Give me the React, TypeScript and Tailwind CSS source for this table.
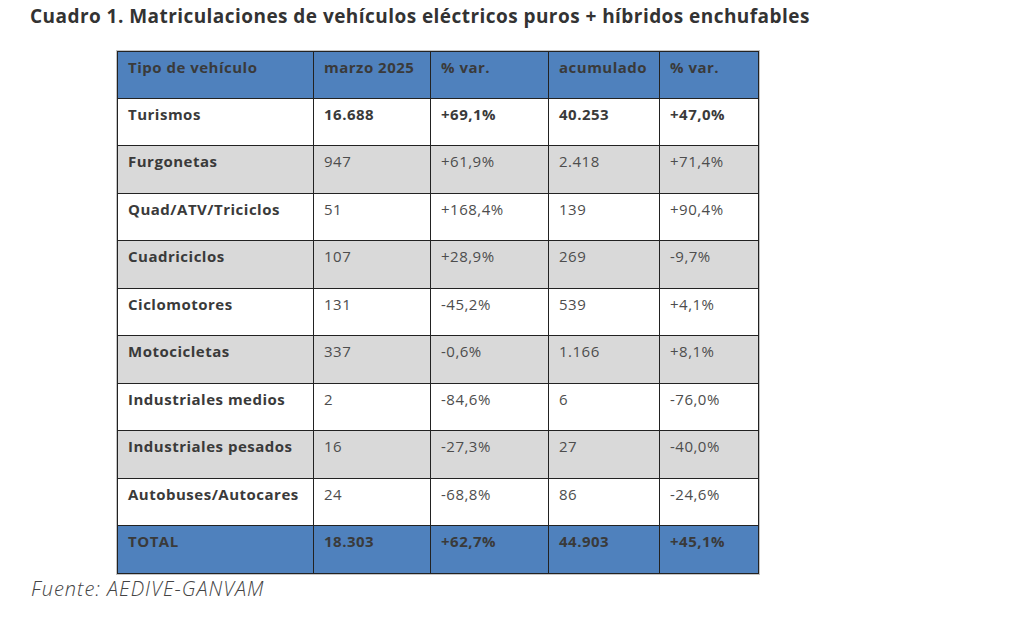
import React from "react"

type Row = {
  tipo: string
  marzo: string
  var1: string
  acum: string
  var2: string
  gray?: boolean
  strong?: boolean
}

const rows: Row[] = [
  { tipo: "Turismos", marzo: "16.688", var1: "+69,1%", acum: "40.253", var2: "+47,0%", strong: true },
  { tipo: "Furgonetas", marzo: "947", var1: "+61,9%", acum: "2.418", var2: "+71,4%", gray: true },
  { tipo: "Quad/ATV/Triciclos", marzo: "51", var1: "+168,4%", acum: "139", var2: "+90,4%" },
  { tipo: "Cuadriciclos", marzo: "107", var1: "+28,9%", acum: "269", var2: "-9,7%", gray: true },
  { tipo: "Ciclomotores", marzo: "131", var1: "-45,2%", acum: "539", var2: "+4,1%" },
  { tipo: "Motocicletas", marzo: "337", var1: "-0,6%", acum: "1.166", var2: "+8,1%", gray: true },
  { tipo: "Industriales medios", marzo: "2", var1: "-84,6%", acum: "6", var2: "-76,0%" },
  { tipo: "Industriales pesados", marzo: "16", var1: "-27,3%", acum: "27", var2: "-40,0%", gray: true },
  { tipo: "Autobuses/Autocares", marzo: "24", var1: "-68,8%", acum: "86", var2: "-24,6%" },
]

const widths = ["w-[196px]", "w-[117px]", "w-[118px]", "w-[111px]", "w-[99px]"]

function Cell({ children, bold, w }: { children: React.ReactNode; bold?: boolean; w: string }) {
  return (
    <td
      className={`${w} border border-[#222] align-top pl-[10px] pt-[6px] text-[15px] leading-[18px] tracking-[0.5px] ${
        bold ? "font-bold text-[#3a3a3a]" : "font-normal text-[#4d4d4d]"
      }`}
    >
      {children}
    </td>
  )
}

export default function App() {
  return (
    <div className="w-[1024px] h-[618px] bg-white font-['Open_Sans',sans-serif]">
      <h1 className="pl-[30px] pt-[4px] text-[19px] leading-[24px] font-bold text-[#333] tracking-[0.45px] whitespace-nowrap">
        Cuadro 1. Matriculaciones de vehículos eléctricos puros + híbridos enchufables
      </h1>

      <div className="ml-[116px] mt-[22px] w-[644px] border border-[#c4c4c4]">
        <table className="w-full border-collapse table-fixed">
          <tbody>
            <tr className="h-[47px] bg-[#4f81bd]">
              {["Tipo de vehículo", "marzo 2025", "% var.", "acumulado", "% var."].map((h, i) => (
                <Cell key={i} w={widths[i]} bold>
                  {h}
                </Cell>
              ))}
            </tr>
            {rows.map((r, i) => (
              <tr key={r.tipo} className={`${i % 2 === 0 ? "h-[47px]" : "h-[48px]"} ${r.gray ? "bg-[#d9d9d9]" : "bg-white"}`}>
                <Cell w={widths[0]} bold>{r.tipo}</Cell>
                <Cell w={widths[1]} bold={r.strong}>{r.marzo}</Cell>
                <Cell w={widths[2]} bold={r.strong}>{r.var1}</Cell>
                <Cell w={widths[3]} bold={r.strong}>{r.acum}</Cell>
                <Cell w={widths[4]} bold={r.strong}>{r.var2}</Cell>
              </tr>
            ))}
            <tr className="h-[48px] bg-[#4f81bd]">
              {["TOTAL", "18.303", "+62,7%", "44.903", "+45,1%"].map((t, i) => (
                <Cell key={i} w={widths[i]} bold>
                  {t}
                </Cell>
              ))}
            </tr>
          </tbody>
        </table>
      </div>

      <p className="pl-[31px] pt-[2px] text-[20px] leading-[24px] italic font-light text-[#444] tracking-[1px]">
        Fuente: AEDIVE-GANVAM
      </p>
    </div>
  )
}
